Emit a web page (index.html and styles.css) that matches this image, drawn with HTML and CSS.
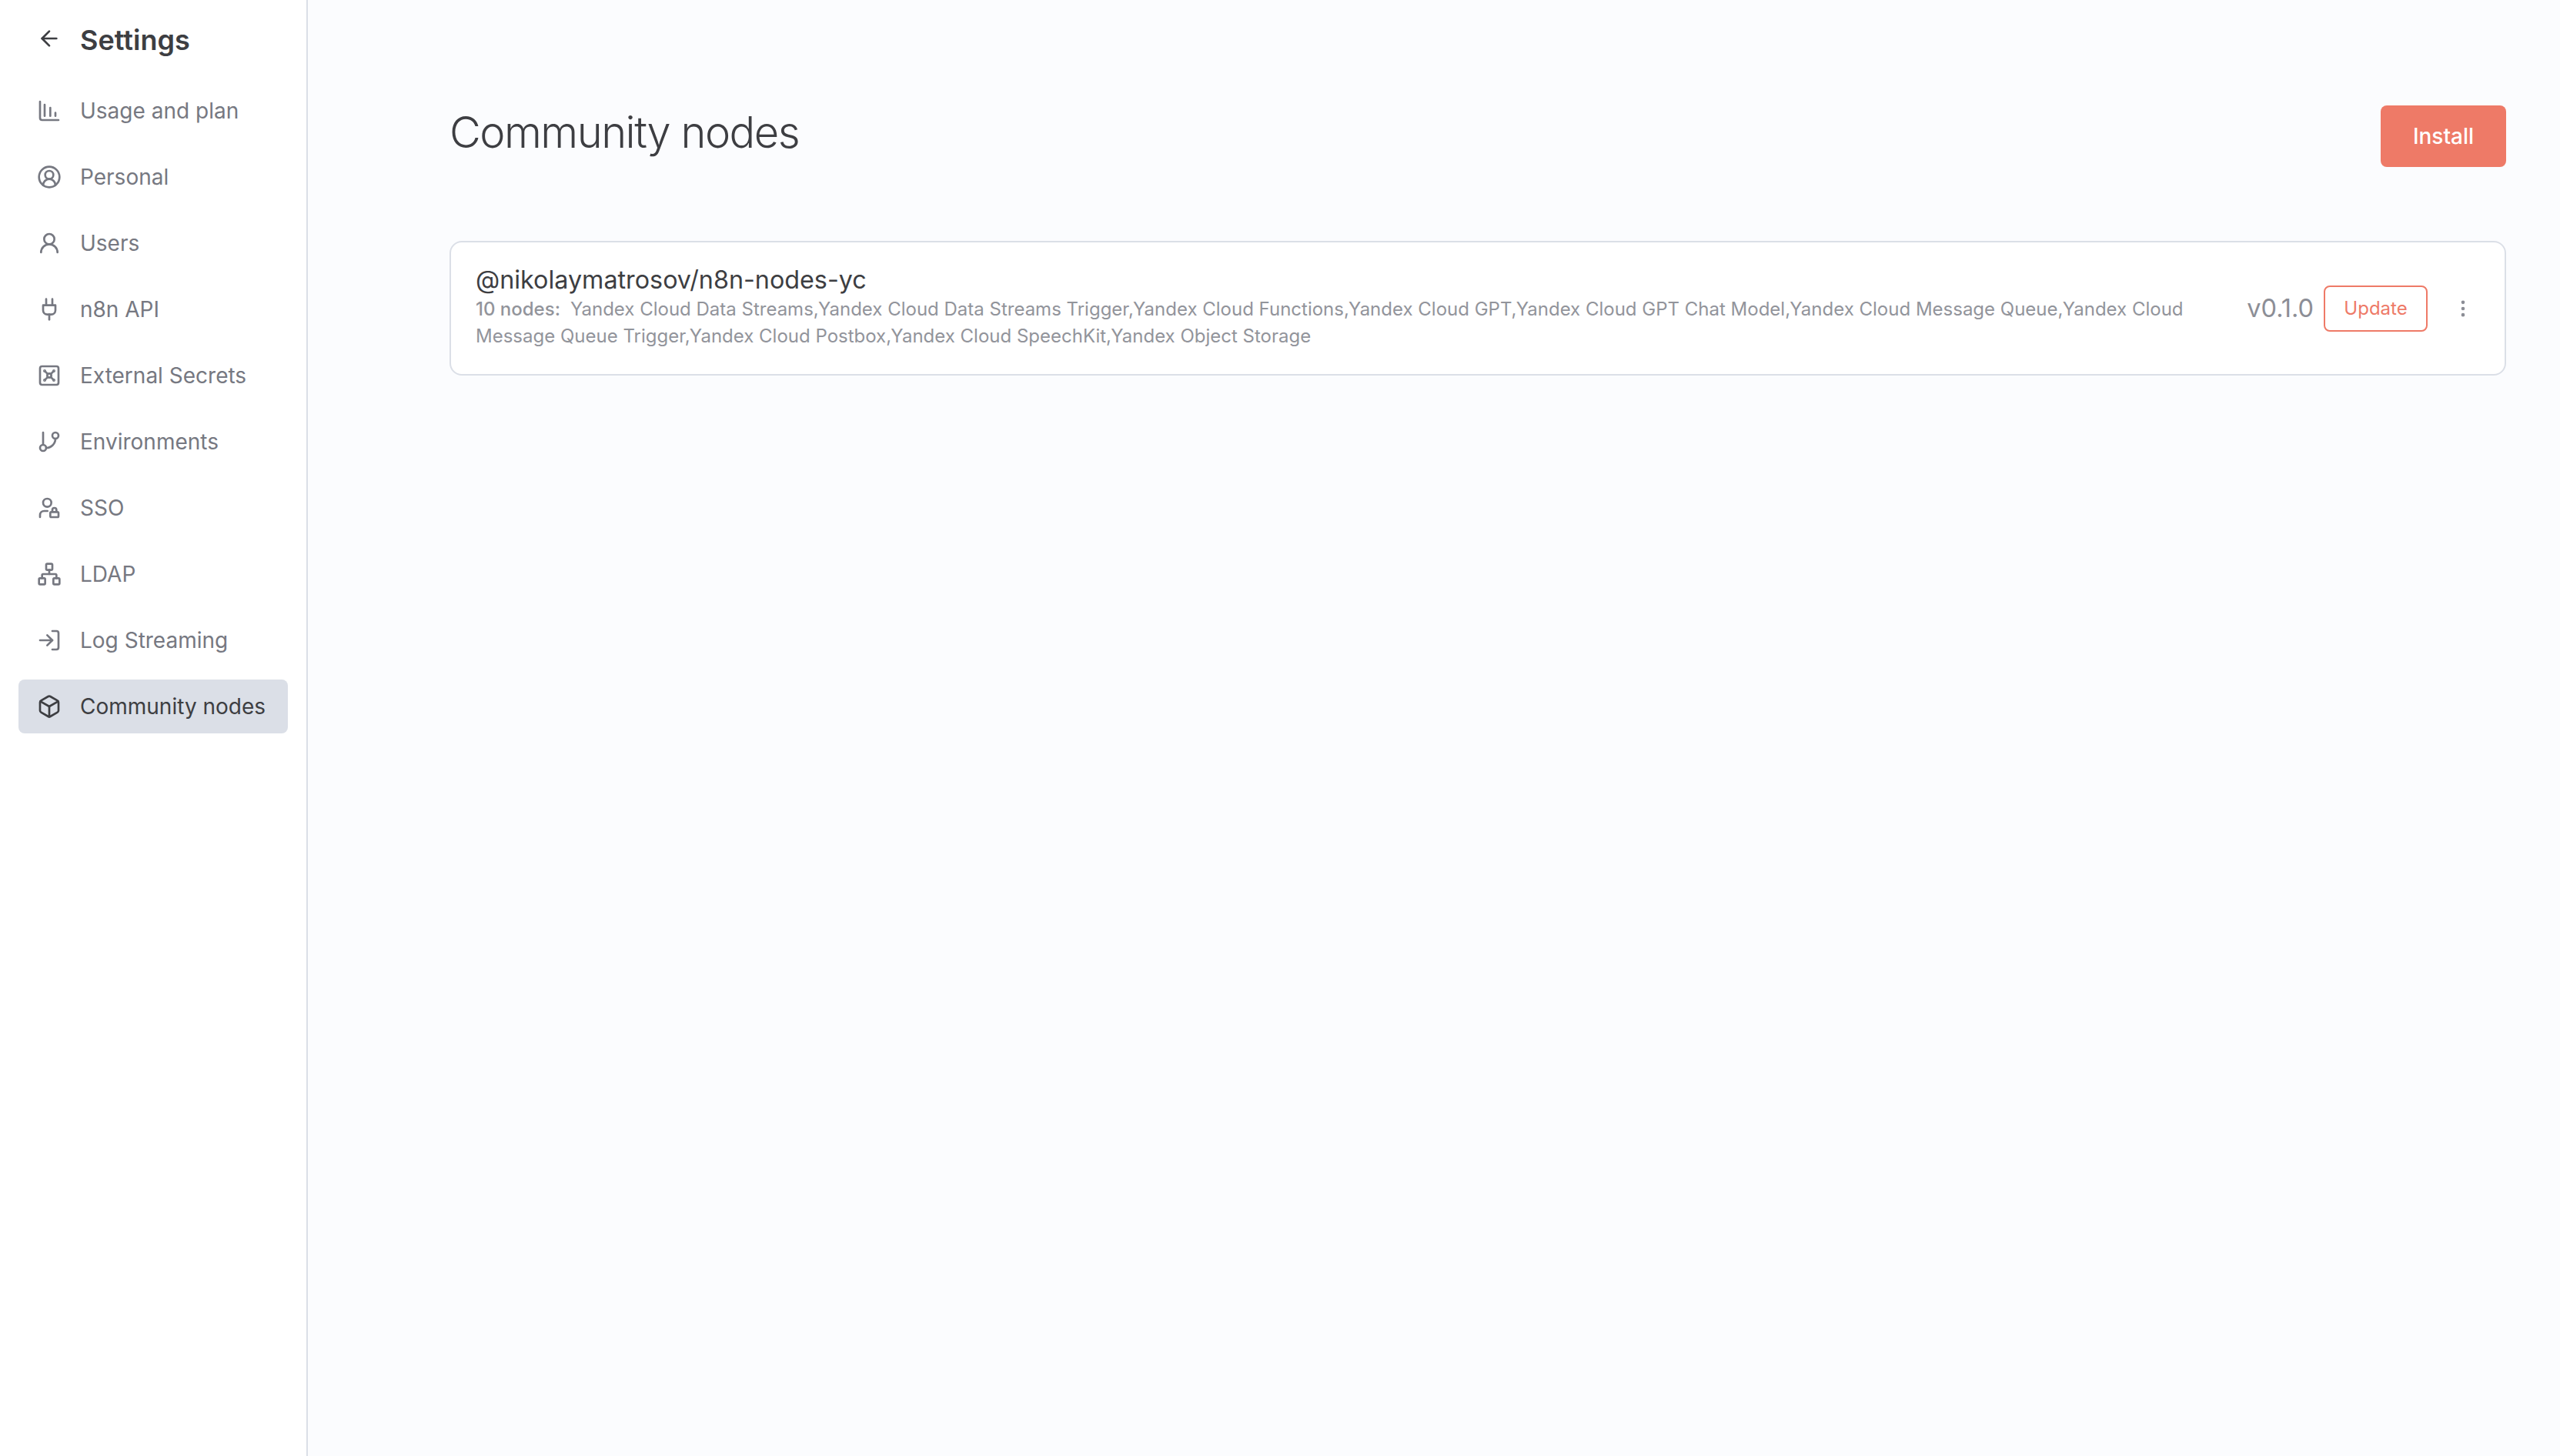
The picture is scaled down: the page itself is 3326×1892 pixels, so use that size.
FILE: index.html
```html
<!DOCTYPE html>
<html lang="en">
<head>
    <meta charset="UTF-8">
    <title>Community nodes</title>
    <link rel="stylesheet" href="styles.css">
</head>
<body>
    <aside class="sidebar">
        <div class="sidebar-head">
            <svg class="icon back" viewBox="0 0 24 24"><path d="m12 19-7-7 7-7"/><path d="M19 12H5"/></svg>
            <span class="sidebar-title">Settings</span>
        </div>
        <nav class="menu">
            <a class="menu-item">
                <svg class="icon" viewBox="0 0 24 24"><path d="M3 3v16a2 2 0 0 0 2 2h16"/><path d="M7.5 17V6"/><path d="M13 17V9"/><path d="M18 17v-3"/></svg>
                <span>Usage and plan</span>
            </a>
            <a class="menu-item">
                <svg class="icon" viewBox="0 0 24 24"><path d="M18 20a6 6 0 0 0-12 0"/><circle cx="12" cy="10" r="4"/><circle cx="12" cy="12" r="10"/></svg>
                <span>Personal</span>
            </a>
            <a class="menu-item">
                <svg class="icon" viewBox="0 0 24 24"><circle cx="12" cy="8" r="5"/><path d="M20 21a8 8 0 0 0-16 0"/></svg>
                <span>Users</span>
            </a>
            <a class="menu-item">
                <svg class="icon" viewBox="0 0 24 24"><path d="M12 22v-5"/><path d="M9 8V2"/><path d="M15 8V2"/><path d="M18 8v5a4 4 0 0 1-4 4h-4a4 4 0 0 1-4-4V8Z"/></svg>
                <span>n8n API</span>
            </a>
            <a class="menu-item">
                <svg class="icon" viewBox="0 0 24 24"><rect width="18" height="18" x="3" y="3" rx="2"/><circle cx="7.5" cy="7.5" r=".5"/><path d="m7.9 7.9 2.7 2.7"/><circle cx="16.5" cy="7.5" r=".5"/><path d="m13.4 10.6 2.7-2.7"/><circle cx="7.5" cy="16.5" r=".5"/><path d="m7.9 16.1 2.7-2.7"/><circle cx="16.5" cy="16.5" r=".5"/><path d="m13.4 13.4 2.7 2.7"/><circle cx="12" cy="12" r="2"/></svg>
                <span>External Secrets</span>
            </a>
            <a class="menu-item">
                <svg class="icon" viewBox="0 0 24 24"><path d="M6 3v12"/><circle cx="18" cy="6" r="3"/><circle cx="6" cy="18" r="3"/><path d="M18 9a9 9 0 0 1-9 9"/></svg>
                <span>Environments</span>
            </a>
            <a class="menu-item">
                <svg class="icon" viewBox="0 0 24 24"><circle cx="10" cy="7" r="4"/><path d="M10.3 15H7a4 4 0 0 0-4 4v2"/><path d="M15 15.5V14a2 2 0 0 1 4 0v1.5"/><rect width="8" height="5" x="13" y="16" rx=".9"/></svg>
                <span>SSO</span>
            </a>
            <a class="menu-item">
                <svg class="icon" viewBox="0 0 24 24"><rect x="16" y="16" width="6" height="6" rx="1"/><rect x="2" y="16" width="6" height="6" rx="1"/><rect x="9" y="2" width="6" height="6" rx="1"/><path d="M5 16v-3a1 1 0 0 1 1-1h12a1 1 0 0 1 1 1v3"/><path d="M12 12V8"/></svg>
                <span>LDAP</span>
            </a>
            <a class="menu-item">
                <svg class="icon" viewBox="0 0 24 24"><path d="M15 3h4a2 2 0 0 1 2 2v14a2 2 0 0 1-2 2h-4"/><path d="m10 17 5-5-5-5"/><path d="M15 12H3"/></svg>
                <span>Log Streaming</span>
            </a>
            <a class="menu-item active">
                <svg class="icon" viewBox="0 0 24 24"><path d="M21 8a2 2 0 0 0-1-1.73l-7-4a2 2 0 0 0-2 0l-7 4A2 2 0 0 0 3 8v8a2 2 0 0 0 1 1.73l7 4a2 2 0 0 0 2 0l7-4A2 2 0 0 0 21 16Z"/><path d="m3.3 7 8.7 5 8.7-5"/><path d="M12 22V12"/></svg>
                <span>Community nodes</span>
            </a>
        </nav>
    </aside>

    <main class="content">
        <div class="page-head">
            <h1>Community nodes</h1>
            <button class="btn-install" type="button">Install</button>
        </div>

        <div class="package-card">
            <div class="package-info">
                <div class="package-name">@nikolaymatrosov/n8n-nodes-yc</div>
                <p class="package-nodes"><span class="node-count">10 nodes:</span>Yandex Cloud Data Streams,Yandex Cloud Data Streams Trigger,Yandex Cloud Functions,Yandex Cloud GPT,Yandex Cloud GPT Chat Model,Yandex Cloud Message Queue,Yandex Cloud Message Queue Trigger,Yandex Cloud Postbox,Yandex Cloud SpeechKit,Yandex Object Storage</p>
            </div>
            <div class="package-actions">
                <span class="version">v0.1.0</span>
                <button class="btn-update" type="button">Update</button>
                <svg class="dots" viewBox="0 0 24 24"><circle cx="12" cy="5" r="1"/><circle cx="12" cy="12" r="1"/><circle cx="12" cy="19" r="1"/></svg>
            </div>
        </div>
    </main>
</body>
</html>
```

FILE: styles.css
```css
body {
    margin: 0;
    height: 1892px;
    display: flex;
    overflow: hidden;
    font-family: Inter, "Liberation Sans", sans-serif;
    background-color: #fbfcfe;
    color: #3d3e42;
}
.sidebar {
    width: 350px;
    flex-shrink: 0;
    background-color: #ffffff;
    border-right: 2px solid #dbdfe7;
    padding: 0 24px;
}
.sidebar-head {
    display: flex;
    align-items: center;
    height: 32px;
    padding: 36px 0 0 24px;
    gap: 24px;
}
.back {
    margin-top: -4px;
}
.sidebar-title {
    font-size: 36px;
    font-weight: 600;
}
.menu {
    display: flex;
    flex-direction: column;
    gap: 16px;
    margin-top: 41px;
}
.menu-item {
    display: flex;
    align-items: center;
    gap: 24px;
    height: 70px;
    padding-left: 24px;
    border-radius: 8px;
    font-size: 28px;
    color: #767881;
}
.menu-item.active {
    background-color: #dbdfe7;
    color: #3d3e42;
}
.icon {
    width: 32px;
    height: 32px;
    flex-shrink: 0;
    fill: none;
    stroke: currentColor;
    stroke-width: 2;
    stroke-linecap: round;
    stroke-linejoin: round;
}
.content {
    flex: 1;
    padding: 137px 70px 0 184px;
}
.page-head {
    display: flex;
    justify-content: space-between;
    align-items: flex-start;
}
h1 {
    margin: 0;
    font-size: 56px;
    font-weight: 300;
    letter-spacing: -1.5px;
    line-height: 70px;
}
.btn-install {
    width: 163px;
    height: 80px;
    border: none;
    border-radius: 8px;
    background-color: #ee7a67;
    color: #ffffff;
    font-family: inherit;
    font-size: 28px;
    font-weight: 450;
}
.package-card {
    margin-top: 96px;
    display: flex;
    align-items: center;
    height: 175px;
    box-sizing: border-box;
    padding: 0 32px;
    background-color: #ffffff;
    border: 2px solid #dbdfe7;
    border-radius: 16px;
}
.package-info {
    flex: 1;
    min-width: 0;
    padding-bottom: 3px;
}
.package-name {
    font-size: 32.3px;
    line-height: 40px;
}
.package-nodes {
    margin: 0;
    max-width: 2240px;
    font-size: 24px;
    line-height: 35px;
    color: #92949b;
}
.node-count {
    font-weight: 500;
    margin-right: 13px;
}
.package-actions {
    display: flex;
    align-items: center;
    gap: 13px;
}
.version {
    font-size: 32.5px;
    color: #8c8e96;
}
.btn-update {
    width: 135px;
    height: 60px;
    background-color: #ffffff;
    border: 2px solid #ee7a67;
    border-radius: 8px;
    color: #ee7a67;
    font-family: inherit;
    font-size: 24px;
    font-weight: 400;
}
.dots {
    width: 28px;
    height: 28px;
    margin-left: 19px;
    margin-right: 8px;
    fill: #8c8e96;
    stroke: #8c8e96;
    stroke-width: 2;
}
```
